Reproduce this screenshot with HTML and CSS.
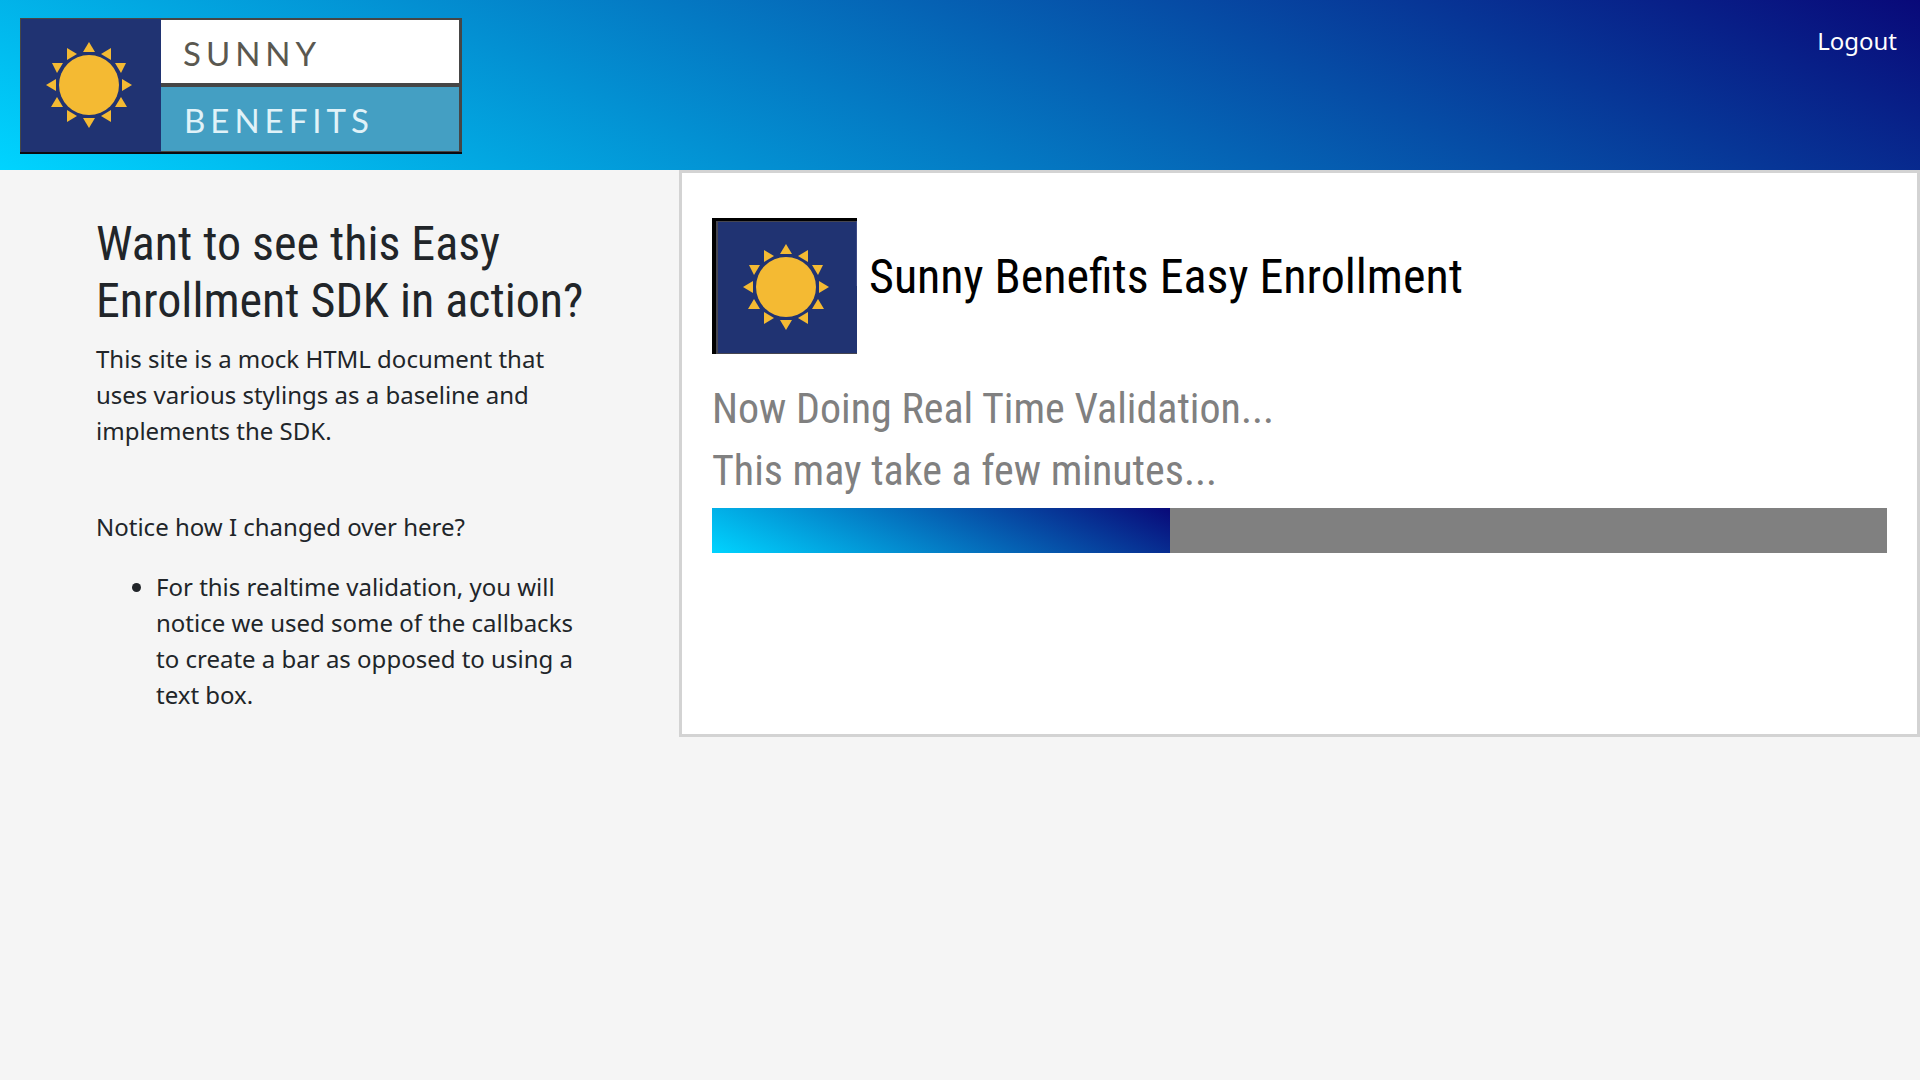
FILE: index.html
```html
<!DOCTYPE html>
<html lang="en">
<head>
<meta charset="utf-8">
<meta name="viewport" content="width=device-width, initial-scale=1">
<title>Sunny Benefits Easy Enrollment</title>
<link rel="stylesheet" href="styles.css">
</head>
<body>
<svg class="defs" aria-hidden="true">
  <symbol id="sun" viewBox="0 0 88 88">
    <g fill="#f4ba33">
      <circle cx="44" cy="44" r="30"/>
      <g id="rays">
        <path d="M44 1l6 10H38z"/>
        <path d="M66 7v12l-10-6z"/>
        <path d="M81 22l-5 10-6-10z"/>
        <path d="M87 44l-10 6V38z"/>
        <path d="M76 56l6 10H70z"/>
        <path d="M66 69v12l-10-6z"/>
        <path d="M44 87l-6-10h12z"/>
        <path d="M22 69v12l10-6z"/>
        <path d="M12 56l6 10H6z"/>
        <path d="M1 44l10 6V38z"/>
        <path d="M7 22l5 10 6-10z"/>
        <path d="M22 7v12l10-6z"/>
      </g>
    </g>
  </symbol>
</svg>
<header class="header">
  <svg class="logo" viewBox="0 0 442 136" role="img" aria-label="Sunny Benefits">
    <path fill="#464646" d="M0 0h442v136H0z"/>
    <path fill="#203372" d="M1 1h140v133H1z"/>
    <path fill="#fff" d="M141 2h298v63H141z"/>
    <path fill="#449fc3" d="M141 69h298v64H141z"/>
    <path fill="#0b0b10" d="M0 134h442v2H0z"/>
    <use href="#sun" x="25" y="23" width="88" height="88"/>
    <text class="logo-text logo-dark" x="163" y="48">SUNNY</text>
    <text class="logo-text logo-light" x="164" y="115">BENEFITS</text>
  </svg>
  <a class="logout" href="#">Logout</a>
</header>
<main class="content">
  <section class="intro">
    <h1 class="title">Want to see this Easy Enrollment SDK in action?</h1>
    <p class="text">This site is a mock HTML document that uses various stylings as a baseline and implements the SDK.</p>
    <p class="text notice">Notice how I changed over here?</p>
    <ul class="list">
      <li>For this realtime validation, you will notice we used some of the callbacks to create a bar as opposed to using a text box.</li>
    </ul>
  </section>
  <section class="panel">
    <div class="brand">
      <svg class="mark" viewBox="0 0 145 136" aria-hidden="true">
        <path fill="#000" d="M0 0h145v136H0z"/>
        <path fill="#464650" d="M4 3h141v133H4z"/>
        <path fill="#203372" d="M6 4h138v131H6z"/>
        <path fill="#3c4a86" d="M144 3h1v65h-1z"/>
        <path fill="#203372" d="M144 68h1v67h-1z"/>
        <use href="#sun" x="30" y="25" width="88" height="88"/>
      </svg>
      <h2 class="title brand-title">Sunny Benefits Easy Enrollment</h2>
    </div>
    <h3 class="status">Now Doing Real Time Validation...</h3>
    <h3 class="status">This may take a few minutes...</h3>
    <div class="bar" role="progressbar" aria-label="Validation progress" aria-valuenow="39" aria-valuemin="0" aria-valuemax="100">
      <div class="bar-fill" style="width: 39%"></div>
    </div>
  </section>
</main>
</body>
</html>
```
FILE: styles.css
```css
* {
  box-sizing: border-box;
}

body {
  margin: 0;
  background: #f5f5f5;
  color: #212529;
  font: 24px/36px "Noto Sans", sans-serif;
}

.defs {
  display: block;
  width: 0;
  height: 0;
}

.header,
.bar-fill {
  background: linear-gradient(25deg, #00d4ff 0%, #090979 100%);
}

.header {
  display: flex;
  justify-content: space-between;
  align-items: flex-start;
  padding: 18px 23px 16px 20px;
}

.logo {
  display: block;
  width: 442px;
  height: 136px;
}

.logo-text {
  font-family: Lato, sans-serif;
  font-size: 33px;
  font-weight: 400;
  letter-spacing: 5px;
}

.logo-dark {
  fill: #5a5850;
}

.logo-light {
  fill: #e0f2f8;
}

.logout {
  margin-top: 5px;
  color: #fff;
  text-decoration: none;
}

.content {
  display: grid;
  grid-template-columns: 679fr 1241fr;
}

.intro {
  padding: 45px 90px 0 96px;
}

.title,
.status {
  margin: 0;
  font-family: "Roboto Condensed", Roboto, sans-serif;
  font-weight: 400;
}

.title {
  margin-bottom: 12px;
  font-size: 48px;
  line-height: 57px;
}

.text {
  margin: 0 0 24px;
}

.notice {
  margin-top: 60px;
}

.list {
  margin: 0 0 24px;
  padding-left: 60px;
}

.panel {
  padding: 45px 30px;
  border: 3px solid #d3d3d3;
  background: #fff;
}

.brand {
  display: flex;
  align-items: center;
  gap: 12px;
  margin-bottom: 30px;
  color: #000;
}

.brand-title {
  margin-bottom: 20px;
}

.mark {
  flex: none;
  width: 145px;
  height: 136px;
}

.status {
  margin-bottom: 12px;
  color: #808080;
  font-size: 42px;
  line-height: 50px;
}

.bar {
  height: 45px;
  background: #808080;
}

.bar-fill {
  height: 100%;
}
```
